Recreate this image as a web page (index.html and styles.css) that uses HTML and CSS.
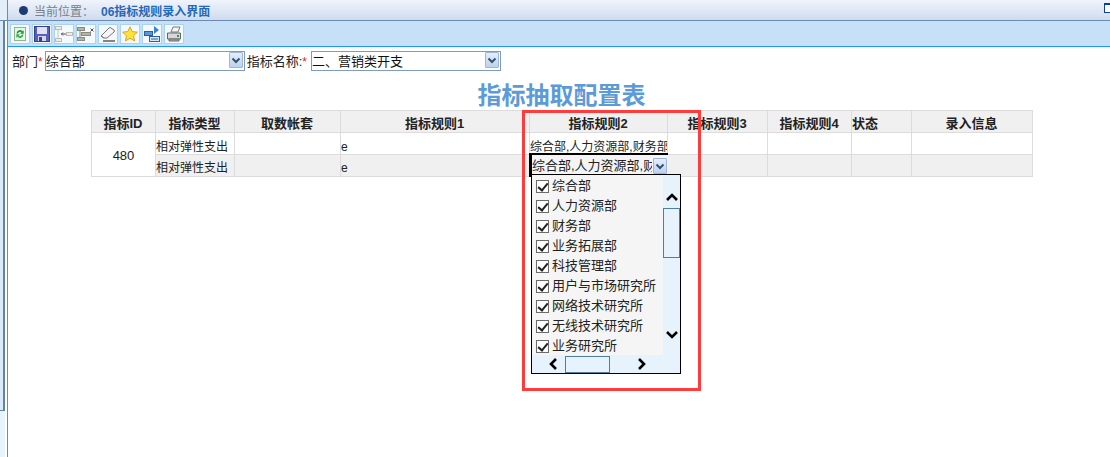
FILE: index.html
```html
<!DOCTYPE html>
<html lang="zh-CN">
<head>
    <meta charset="UTF-8">
    <title>06指标规则录入界面</title>
    <link rel="stylesheet" href="styles.css">
</head>
<body>
    <div class="page">
        <div class="rail">
            <div class="rail-top"></div>
            <div class="rail-mid"></div>
            <div class="rail-bottom"></div>
        </div>

        <div class="main">
            <div class="crumb">
                <span class="crumb-dot"></span>
                <span class="crumb-label">当前位置：</span>
                <span class="crumb-title">06指标规则录入界面</span>
                <span class="crumb-window"></span>
            </div>

            <div class="toolbar">
                <button class="tool-btn">
                    <svg width="16" height="16" viewBox="0 0 16 16"><rect x="2.500" y="1.500" width="11" height="13" fill="#e8f5e8" stroke="#8ab88a"/><path d="M4.500 7.500a3.600 3.600 0 0 1 6.200-2.300l1-1v3.600H8l1.400-1.400a2 2 0 0 0-3.300 1.100z" fill="#1f9a3a"/><path d="M11.500 8.500a3.600 3.600 0 0 1-6.200 2.300l-1 1V8.200H8l-1.400 1.400a2 2 0 0 0 3.300-1.100z" fill="#2fb04a"/></svg>
                </button>
                <button class="tool-btn">
                    <svg width="16" height="16" viewBox="0 0 16 16"><rect x="0.500" y="0.500" width="15" height="15" fill="#5a5fbc" stroke="#3a3d90"/><rect x="3" y="1" width="10" height="7" fill="#dfe1f4"/><rect x="4" y="10" width="8" height="5" fill="#d4d6e6"/><rect x="5" y="11" width="3" height="4" fill="#3a3e96"/></svg>
                </button>
                <button class="tool-btn">
                    <svg width="18" height="16" viewBox="0 0 18 16"><g fill="#ecece8" stroke="#bcbcb4"><rect x="0.500" y="0.500" width="6" height="3"/><rect x="0.500" y="12.500" width="6" height="3"/><rect x="11.500" y="6.500" width="6" height="3"/></g><path d="M3 4v8" fill="none" stroke="#c4c4bc"/><path d="M6 8h5M8 6.500L6.500 8 8 9.500" fill="none" stroke="#555"/></svg>
                </button>
                <button class="tool-btn">
                    <svg width="18" height="16" viewBox="0 0 18 16"><g fill="#b4b4a8" stroke="#8a8a7e"><rect x="0.500" y="1.500" width="7" height="3"/><rect x="0.500" y="11.500" width="7" height="3"/><rect x="4.500" y="6.500" width="9" height="3"/></g><path d="M3 4v8" fill="none" stroke="#8a8a7e"/><path d="M13.500 2.500l3 3M16.500 2.500l-3 3" fill="none" stroke="#555"/></svg>
                </button>
                <button class="tool-btn">
                    <svg width="16" height="16" viewBox="0 0 16 16"><path d="M1 10l8-8q1-1 2 0l3 2q1 1 0 2l-7 6H4z" fill="#f6f6f6" stroke="#777"/><path d="M1 10l3 2" fill="none" stroke="#777"/><path d="M3 15h12" fill="none" stroke="#111"/></svg>
                </button>
                <button class="tool-btn">
                    <svg width="16" height="16" viewBox="0 0 16 16"><path d="M8 .8l2.200 4.800 5.200.6-3.900 3.500 1.100 5.200L8 12.300l-4.600 2.600 1.100-5.200L.6 6.200l5.200-.6z" fill="#ffe23c" stroke="#d8a818"/></svg>
                </button>
                <button class="tool-btn">
                    <svg width="16" height="16" viewBox="0 0 16 16"><rect x="0.500" y="5.500" width="8" height="4" fill="#5a96d8" stroke="#2a5ea8"/><rect x="5.500" y="10.500" width="10" height="5" fill="#dce8f6" stroke="#2a5ea8"/><path d="M10 0l5 4-5 4z" fill="#3a82d4"/><path d="M7 13h7" fill="none" stroke="#2a5ea8"/></svg>
                </button>
                <button class="tool-btn">
                    <svg width="16" height="16" viewBox="0 0 16 16"><path d="M5 6l2-5h7l-2 5z" fill="#f4f4f4" stroke="#777"/><path d="M1.500 7h13v6h-13z" fill="#d6d8da" stroke="#666"/><path d="M3 13h10v2H3z" fill="#a9acae" stroke="#666"/><rect x="11" y="9" width="2" height="2" fill="#18a848"/></svg>
                </button>
            </div>

            <div class="filter-row">
                <label class="field-label label-dept">部门<span class="star">*</span></label>
                <div class="combo combo-dept">
                    <span class="combo-text">综合部</span>
                    <span class="combo-arrow"><svg width="10" height="7" viewBox="0 0 10 7"><path d="M1.500 1.500L5 5l3.500-3.500" fill="none" stroke="#36506f" stroke-width="2"/></svg></span>
                </div>
                <label class="field-label label-name">指标名称:<span class="star">*</span></label>
                <div class="combo combo-name">
                    <span class="combo-text">二、营销类开支</span>
                    <span class="combo-arrow"><svg width="10" height="7" viewBox="0 0 10 7"><path d="M1.500 1.500L5 5l3.500-3.500" fill="none" stroke="#36506f" stroke-width="2"/></svg></span>
                </div>
            </div>

            <div class="sheet">
                <h1 class="sheet-title">指标抽取配置表</h1>
                <table class="rule-table">
                    <colgroup>
                        <col class="col-id"><col class="col-type"><col class="col-book"><col class="col-rule1"><col class="col-rule2"><col class="col-rule3"><col class="col-rule4"><col class="col-state"><col class="col-info">
                    </colgroup>
                    <thead>
                        <tr>
                            <th>指标ID</th>
                            <th>指标类型</th>
                            <th>取数帐套</th>
                            <th>指标规则1</th>
                            <th>指标规则2</th>
                            <th>指标规则3</th>
                            <th>指标规则4</th>
                            <th class="th-left">状态</th>
                            <th>录入信息</th>
                        </tr>
                    </thead>
                    <tbody>
                        <tr>
                            <td class="cell-id" rowspan="2">480</td>
                            <td>相对弹性支出</td>
                            <td></td>
                            <td>e</td>
                            <td>综合部,人力资源部,财务部</td>
                            <td></td>
                            <td></td>
                            <td></td>
                            <td></td>
                        </tr>
                        <tr class="row-alt">
                            <td>相对弹性支出</td>
                            <td></td>
                            <td>e</td>
                            <td class="cell-edit">
                                <div class="editor">
                                    <span class="editor-text">综合部,人力资源部,财务部</span>
                                    <span class="editor-arrow"><svg width="10" height="7" viewBox="0 0 10 7"><path d="M1.500 1.500L5 5l3.500-3.500" fill="none" stroke="#36506f" stroke-width="2"/></svg></span>
                                </div>
                                <div class="dropdown">
                                    <div class="dropdown-body">
                                        <ul class="check-list">
                                            <li><span class="check"></span>综合部</li>
                                            <li><span class="check"></span>人力资源部</li>
                                            <li><span class="check"></span>财务部</li>
                                            <li><span class="check"></span>业务拓展部</li>
                                            <li><span class="check"></span>科技管理部</li>
                                            <li><span class="check"></span>用户与市场研究所</li>
                                            <li><span class="check"></span>网络技术研究所</li>
                                            <li><span class="check"></span>无线技术研究所</li>
                                            <li><span class="check"></span>业务研究所</li>
                                        </ul>
                                        <div class="vscroll">
                                            <svg class="chev-up" width="14" height="9" viewBox="0 0 14 9"><path d="M2 7l5-5 5 5" fill="none" stroke="#000" stroke-width="2.600"/></svg>
                                            <div class="vthumb"></div>
                                            <svg class="chev-down" width="14" height="9" viewBox="0 0 14 9"><path d="M2 2l5 5 5-5" fill="none" stroke="#000" stroke-width="2.600"/></svg>
                                        </div>
                                    </div>
                                    <div class="hscroll">
                                        <svg class="chev-left" width="9" height="14" viewBox="0 0 9 14"><path d="M7 2L2 7l5 5" fill="none" stroke="#000" stroke-width="2.600"/></svg>
                                        <div class="hthumb"></div>
                                        <svg class="chev-right" width="9" height="14" viewBox="0 0 9 14"><path d="M2 2l5 5-5 5" fill="none" stroke="#000" stroke-width="2.600"/></svg>
                                    </div>
                                </div>
                            </td>
                            <td></td>
                            <td></td>
                            <td></td>
                            <td></td>
                        </tr>
                    </tbody>
                </table>
                <div class="red-mark"></div>
            </div>
        </div>
    </div>
</body>
</html>
```

FILE: styles.css
```css
* {
    margin: 0;
    padding: 0;
    box-sizing: border-box;
}

html, body {
    height: 100%;
    overflow: hidden;
}

body {
    font-family: "Liberation Sans", "Noto Sans CJK SC", sans-serif;
    font-size: 13px;
    color: #222;
    background: #fff;
}

.page {
    display: flex;
    height: 457px;
}

/* left collapsed frame */
.rail {
    width: 8px;
    display: flex;
    flex-direction: column;
    border-right: 1px solid #6d8ab0;
    flex: none;
}

.rail-top {
    height: 21px;
    background: #e4eefa;
    border-bottom: 1px solid #6d8ab0;
}

.rail-mid {
    height: 390px;
    width: 5px;
    background: #dbeaf8;
    border-right: 2px solid #5f84ae;
    border-bottom: 1px solid #5f84ae;
}

.rail-bottom {
    flex: 1;
    width: 5px;
    background: #e8f4fd;
}

.main {
    flex: 1;
    min-width: 0;
}

.crumb {
    height: 21px;
    display: flex;
    align-items: center;
    background: linear-gradient(#f0f4fc, #cfdcee);
    border-bottom: 1px solid #6d8ab0;
    padding-left: 11px;
    position: relative;
    font-size: 12px;
}

.crumb-dot {
    width: 9px;
    height: 9px;
    border-radius: 50%;
    background: #1e3a72;
    margin-right: 6px;
}

.crumb-label {
    color: #7a7f88;
    width: 67px;
}

.crumb-title {
    color: #2468b8;
    font-weight: bold;
}

.crumb-window {
    position: absolute;
    right: 0;
    top: 3px;
    width: 6px;
    height: 10px;
    border: 1px solid #0c3ea6;
    border-top-width: 2px;
    border-right: none;
    background: #fff;
}

.toolbar {
    height: 26px;
    display: flex;
    align-items: center;
    gap: 2px;
    padding-left: 2px;
    background: #c5e0f7;
    border-bottom: 1px solid #1a9af5;
}

.tool-btn {
    width: 20px;
    height: 20px;
    display: flex;
    align-items: center;
    justify-content: center;
    background: #f4f9fd;
    border: 1px solid #a9d3f3;
}

.filter-row {
    display: flex;
    align-items: center;
    height: 20px;
    margin-top: 4px;
    padding-left: 4px;
}

.field-label {
    white-space: nowrap;
    line-height: 18px;
    padding-top: 2px;
}

.label-dept {
    margin-right: 2px;
}

.label-name {
    margin-right: 4px;
}

.star {
    color: #e02020;
    font-size: 12px;
}

.combo {
    height: 20px;
    display: flex;
    align-items: flex-start;
    justify-content: space-between;
    border: 1px solid #7d9cc4;
    background: #fff;
    padding-right: 1px;
}

.combo-dept {
    width: 200px;
    margin-right: 2px;
}

.combo-name {
    width: 190px;
}

.combo-text {
    line-height: 20px;
    color: #111;
}

.combo-arrow,
.editor-arrow {
    width: 14px;
    height: 16px;
    display: flex;
    align-items: center;
    justify-content: center;
    background: linear-gradient(#e4eefb, #bcd2f0);
    border: 1px solid #9db6da;
    border-radius: 1px;
}

.sheet {
    position: relative;
    width: 941px;
    margin: 11px 0 0 83px;
}

.sheet-title {
    font-size: 24px;
    line-height: 28px;
    font-weight: bold;
    color: #5c9bd8;
    text-align: center;
}

.rule-table {
    width: 941px;
    table-layout: fixed;
    border-collapse: collapse;
    font-size: 12px;
    line-height: 14px;
}

.col-id { width: 64px; }
.col-type { width: 79px; }
.col-book { width: 106px; }
.col-rule1 { width: 189px; }
.col-rule2 { width: 138px; }
.col-rule3 { width: 100px; }
.col-rule4 { width: 84px; }
.col-state { width: 60px; }
.col-info { width: 121px; }

.rule-table th,
.rule-table td {
    height: 22px;
    border: 1px solid #dcdcdc;
    white-space: nowrap;
    overflow: hidden;
}

.rule-table th {
    background: #f0f0f0;
    font-size: 13px;
    font-weight: bold;
    text-align: center;
    vertical-align: top;
    padding: 6px 1px 0 0;
}

.rule-table .th-left {
    text-align: left;
}

.rule-table td {
    padding: 7px 0 0;
    text-align: left;
    vertical-align: top;
}

.rule-table .cell-id {
    padding: 2px 0 0;
    text-align: center;
    vertical-align: middle;
    font-size: 13px;
    background: #fff;
}

.row-alt td {
    padding-top: 6px;
    background: #f0f0f0;
}

.rule-table .cell-edit {
    position: relative;
    overflow: visible;
}

.editor {
    position: absolute;
    left: -1px;
    top: -2px;
    width: 139px;
    height: 24px;
    display: flex;
    align-items: center;
    justify-content: space-between;
    background: #f4f4f4;
    border-top: 2px solid #000;
    border-left: 3px solid #000;
    padding-right: 1px;
    font-size: 13px;
}

.editor-text {
    width: 120px;
    overflow: hidden;
}

.dropdown {
    position: absolute;
    left: 1px;
    top: 19px;
    width: 150px;
    height: 200px;
    display: flex;
    flex-direction: column;
    background: #e6f3fc;
    border: 1px solid #000;
    z-index: 2;
    font-size: 13px;
}

.dropdown-body {
    display: flex;
    flex: 1;
    min-height: 0;
}

.check-list {
    flex: 1;
    list-style: none;
    background: #f5f5f5;
    padding-top: 1px;
}

.check-list li {
    height: 20px;
    display: flex;
    align-items: center;
    padding-left: 4px;
}

/* ticked box */
.check {
    width: 13px;
    height: 13px;
    margin-right: 3px;
    border: 1px solid #6b6b6b;
    background: #fff;
    position: relative;
}

.check::after {
    content: "";
    position: absolute;
    left: 3px;
    top: 0;
    width: 4px;
    height: 8px;
    border: solid #222;
    border-width: 0 2px 2px 0;
    transform: rotate(40deg);
}

.vscroll {
    width: 17px;
    display: flex;
    flex-direction: column;
    align-items: center;
}

.chev-up {
    margin-top: 18px;
}

.vthumb {
    width: 17px;
    height: 50px;
    margin-top: 6px;
    background: #e6f3fc;
    border: 1px solid #4f7fa0;
}

.chev-down {
    margin-top: 72px;
}

.hscroll {
    height: 18px;
    display: flex;
    align-items: center;
    padding-left: 17px;
}

.hthumb {
    width: 45px;
    height: 17px;
    margin-left: 7px;
    background: #e6f3fc;
    border: 1px solid #4f7fa0;
}

.chev-right {
    margin-left: 27px;
}

.red-mark {
    position: absolute;
    left: 431px;
    top: 28px;
    width: 179px;
    height: 281px;
    border: 3px solid #ff3b3b;
    z-index: 3;
}
```
